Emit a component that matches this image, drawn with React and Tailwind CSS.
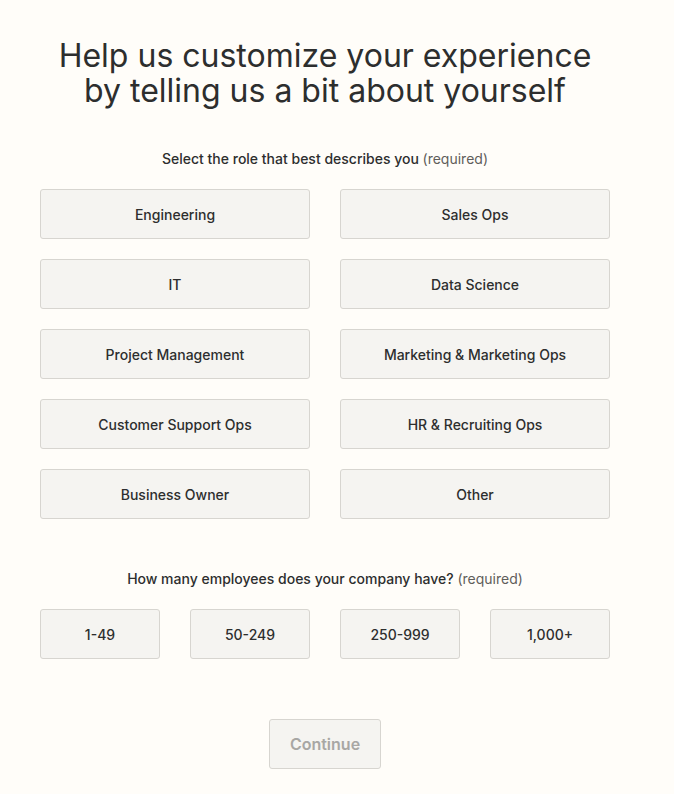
import { useState } from 'react';

const roles = [
  'Engineering',
  'Sales Ops',
  'IT',
  'Data Science',
  'Project Management',
  'Marketing & Marketing Ops',
  'Customer Support Ops',
  'HR & Recruiting Ops',
  'Business Owner',
  'Other',
];

const sizes = ['1-49', '50-249', '250-999', '1,000+'];

function Option({ label, active, onClick }) {
  return (
    <button
      onClick={onClick}
      className={`h-[50px] rounded-[3px] border text-[14px] font-medium text-[#2d2e2e] ${
        active ? 'border-[#ff4f00] bg-[#fff3ec]' : 'border-[#d7d5d0] bg-[#f5f4f1]'
      }`}
    >
      {label}
    </button>
  );
}

export default function App() {
  const [role, setRole] = useState(null);
  const [size, setSize] = useState(null);
  const ready = role !== null && size !== null;

  return (
    <div className="min-h-screen bg-[#fffdf9] font-['Inter','Noto_Sans',sans-serif] text-[#2d2e2e]">
      <div className="w-[570px] ml-[40px] pt-[38px] pb-[25px] flex flex-col items-center">
        <h1 className="text-[32px] leading-[35px] text-center font-normal">
          Help us customize your experience
          <br />
          by telling us a bit about yourself
        </h1>

        {/* Rol */}
        <p className="mt-[41px] text-[14px] leading-[20px] font-medium">
          Select the role that best describes you{' '}
          <span className="font-normal text-[#5f5e5b]">(required)</span>
        </p>
        <div className="mt-[20px] w-full grid grid-cols-2 gap-x-[30px] gap-y-[20px]">
          {roles.map((r) => (
            <Option key={r} label={r} active={role === r} onClick={() => setRole(r)} />
          ))}
        </div>

        {/* Empleados */}
        <p className="mt-[50px] text-[14px] leading-[20px] font-medium">
          How many employees does your company have?{' '}
          <span className="font-normal text-[#5f5e5b]">(required)</span>
        </p>
        <div className="mt-[20px] w-full grid grid-cols-4 gap-x-[30px]">
          {sizes.map((s) => (
            <Option key={s} label={s} active={size === s} onClick={() => setSize(s)} />
          ))}
        </div>

        <button
          disabled={!ready}
          className={`mt-[60px] w-[112px] h-[50px] rounded-[3px] border text-[16px] font-semibold ${
            ready
              ? 'border-[#ff4f00] bg-[#ff4f00] text-white'
              : 'border-[#d7d5d0] bg-[#f5f4f1] text-[#a8a7a4]'
          }`}
        >
          Continue
        </button>
      </div>
    </div>
  );
}
